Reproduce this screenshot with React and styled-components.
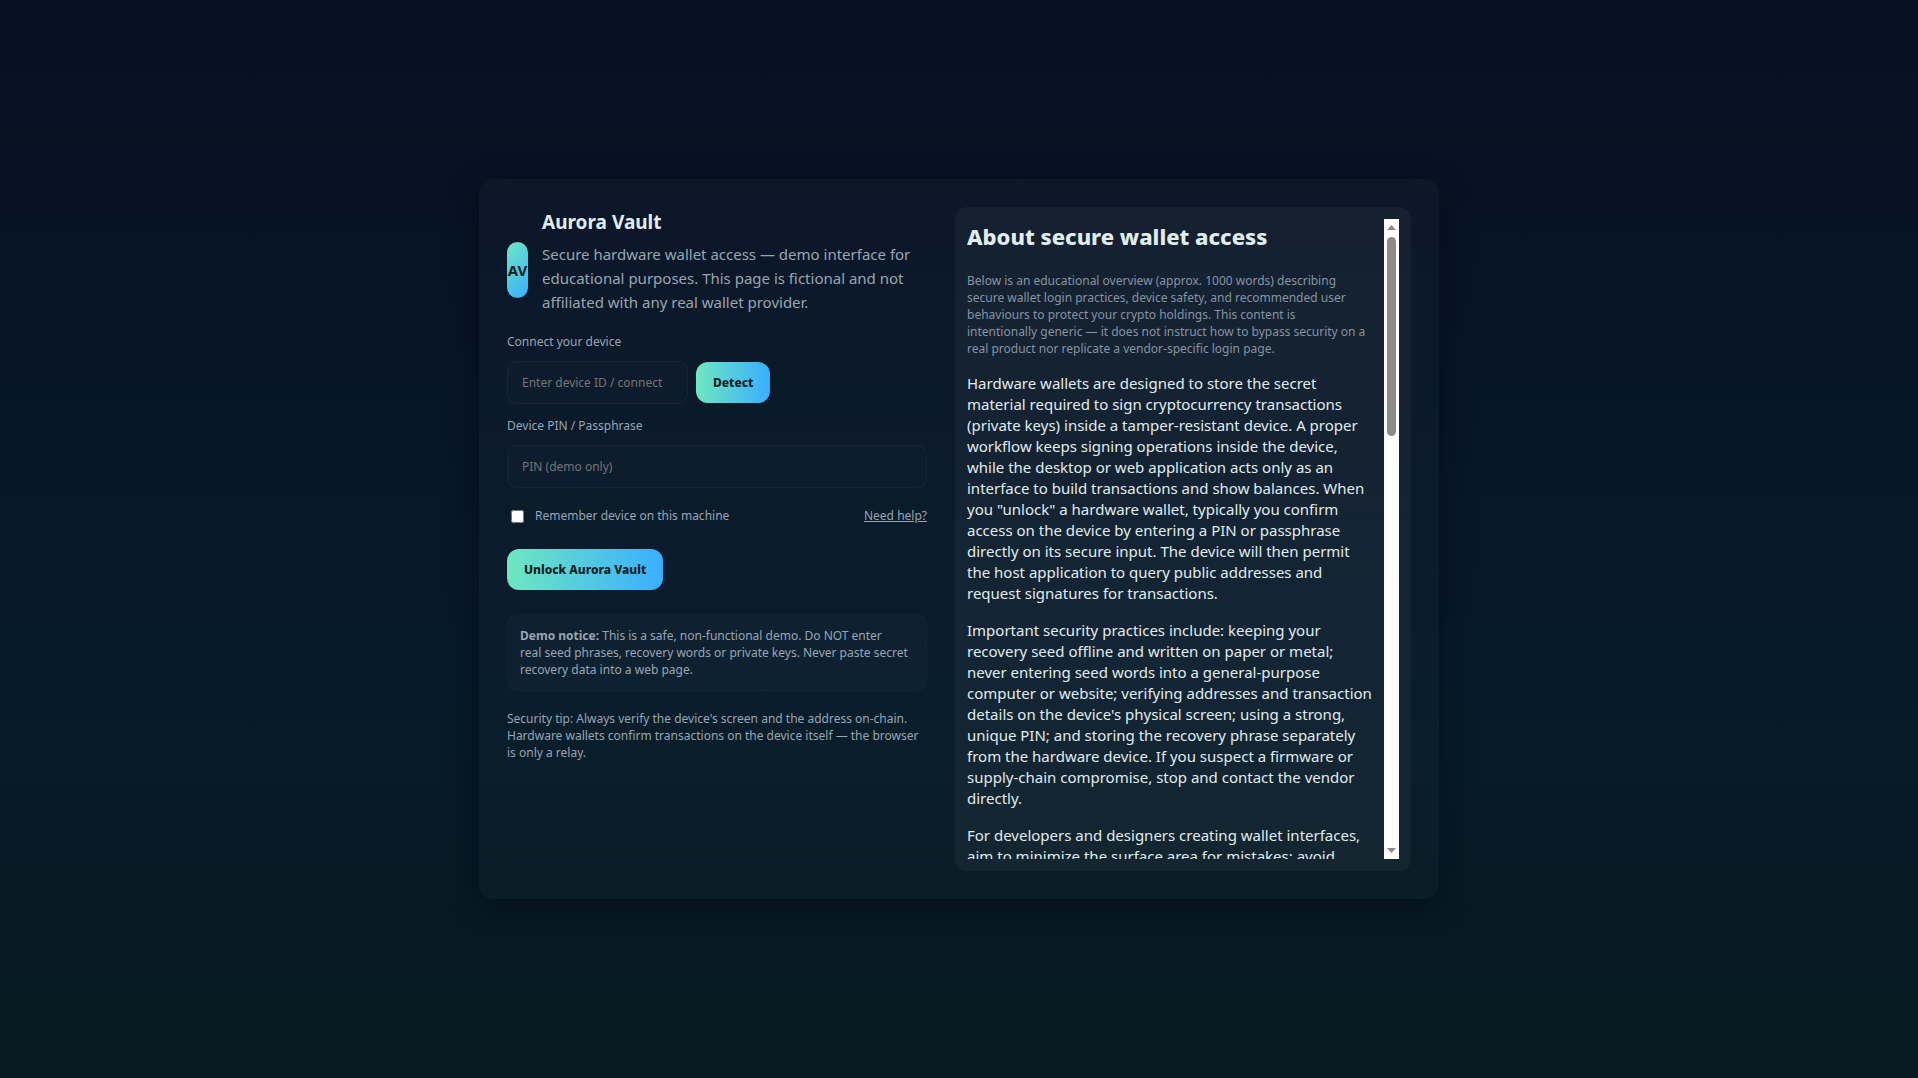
import React, { useState } from 'react';
import styled, { createGlobalStyle } from 'styled-components';

const GlobalStyle = createGlobalStyle`
    * {
        box-sizing: border-box;
    }
    body {
        margin: 0;
        color: #e0ecee;
        font-family: 'Noto Sans', 'Open Sans', sans-serif;
        font-size: 15px;
        line-height: 21px;
    }
`;

const Page = styled.div`
    min-height: 100vh;
    display: flex;
    align-items: center;
    justify-content: center;
    background: linear-gradient(180deg, #071022 0%, #071a2a 60%, #071b21 100%);
`;

const Card = styled.main`
    width: 100%;
    max-width: 960px;
    display: grid;
    grid-template-columns: 420px 1fr;
    gap: 28px;
    padding: 28px;
    border-radius: 14px;
    background: linear-gradient(180deg, rgba(255, 255, 255, 0.02), rgba(255, 255, 255, 0.01));
    box-shadow: 0 8px 30px rgba(2, 6, 23, 0.6);
`;

const Brand = styled.header`
    display: flex;
    align-items: flex-start;
    gap: 14px;
    padding-bottom: 19px;
`;

const Logo = styled.div`
    width: 21px;
    height: 56px;
    margin-top: 35px;
    flex-shrink: 0;
    display: flex;
    align-items: center;
    justify-content: center;
    border-radius: 12px;
    background: linear-gradient(135deg, #6ee7c1, #3aaeff);
    color: #04201f;
    font-weight: 700;
`;

const Title = styled.h1`
    margin: 0 0 5px;
    font-size: 19px;
    line-height: 30px;
`;

const Lead = styled.p`
    margin: 0;
    color: #98a6b3;
    line-height: 24px;
`;

const Form = styled.form`
    display: flex;
    flex-direction: column;
    align-items: flex-start;
`;

const Label = styled.label`
    color: #98a6b3;
    font-size: 12px;
    line-height: 18px;
    margin-bottom: 10px;
`;

const Field = styled.div`
    display: flex;
    align-items: center;
    gap: 8px;
    margin-bottom: 13px;
`;

const Input = styled.input`
    width: ${props => props.$wide ? '100%' : '181px'};
    height: 43px;
    padding: 0 14px;
    border: 1px solid rgba(255, 255, 255, 0.04);
    border-radius: 10px;
    background: rgba(255, 255, 255, 0.01);
    color: inherit;
    font-family: inherit;
    font-size: 12px;
    &::placeholder {
        color: #757575;
    }
`;

const Button = styled.button`
    height: 41px;
    padding: 0 17px;
    border: none;
    border-radius: 12px;
    background: linear-gradient(90deg, #6ee7c1, #3aaeff);
    color: #04201f;
    font-family: inherit;
    font-size: 12px;
    font-weight: 800;
    white-space: nowrap;
    cursor: pointer;
`;

const Row = styled.div`
    align-self: stretch;
    display: flex;
    align-items: center;
    justify-content: space-between;
    margin: 18px 0 23px;
    color: #98a6b3;
    font-size: 12px;
    line-height: 20px;
`;

const Remember = styled.label`
    display: flex;
    align-items: center;
    gap: 11px;
    input {
        width: 13px;
        height: 13px;
        margin: 0 0 0 4px;
    }
`;

const HelpLink = styled.a`
    color: inherit;
`;

const Notice = styled.div`
    margin-top: 24px;
    padding: 12px;
    border: 1px solid rgba(255, 255, 255, 0.02);
    border-radius: 10px;
    background: rgba(255, 255, 255, 0.02);
    color: #98a6b3;
    font-size: 12px;
    line-height: 17px;
`;

const Small = styled.p`
    margin: ${props => props.$margin || '0'};
    color: ${props => props.$dim ? '#8794a1' : '#98a6b3'};
    font-size: 12px;
    line-height: 17px;
`;

const About = styled.aside`
    display: flex;
    padding: 12px;
    border-radius: 12px;
    background: rgba(255, 255, 255, 0.04);
`;

const Scroller = styled.div`
    flex: 1;
    height: 640px;
    padding-right: 9px;
    overflow-y: auto;
    scrollbar-width: none;
`;

const Scrollbar = styled.div`
    width: 15px;
    flex-shrink: 0;
    display: flex;
    flex-direction: column;
    align-items: center;
    justify-content: space-between;
    padding: 6px 0;
    background: #fcfcfc;
`;

const Track = styled.div`
    flex: 1;
    width: 9px;
    margin: 7px 0;
`;

const Thumb = styled.div`
    height: 33%;
    border-radius: 5px;
    background: #8b8b8b;
`;

const Arrow = ({ down }) => (
    <svg width="9" height="5" viewBox="0 0 9 5" aria-hidden="true">
        <polygon points={down ? '0,0 9,0 4.5,5' : '0,5 9,5 4.5,0'} fill="#8b8b8b" />
    </svg>
);

const Heading = styled.h2`
    margin: 0 0 19px;
    font-size: 22px;
    font-weight: 800;
    line-height: 34px;
`;

const Text = styled.p`
    margin: 16px 0;
`;

const paragraphs = [
    'Hardware wallets are designed to store the secret material required to sign cryptocurrency transactions (private keys) inside a tamper-resistant device. A proper workflow keeps signing operations inside the device, while the desktop or web application acts only as an interface to build transactions and show balances. When you "unlock" a hardware wallet, typically you confirm access on the device by entering a PIN or passphrase directly on its secure input. The device will then permit the host application to query public addresses and request signatures for transactions.',
    'Important security practices include: keeping your recovery seed offline and written on paper or metal; never entering seed words into a general-purpose computer or website; verifying addresses and transaction details on the device\'s physical screen; using a strong, unique PIN; and storing the recovery phrase separately from the hardware device. If you suspect a firmware or supply-chain compromise, stop and contact the vendor directly.',
    'For developers and designers creating wallet interfaces, aim to minimize the surface area for mistakes: avoid',
];

const App = () => {
    const [remember, setRemember] = useState(false);

    return (
        <>
            <GlobalStyle />
            <Page>
                <Card>
                    <section>
                        <Brand>
                            <Logo>AV</Logo>
                            <div>
                                <Title>Aurora Vault</Title>
                                <Lead>Secure hardware wallet access — demo interface for educational purposes. This page is fictional and not affiliated with any real wallet provider.</Lead>
                            </div>
                        </Brand>
                        <Form onSubmit={e => e.preventDefault()}>
                            <Label htmlFor="device">Connect your device</Label>
                            <Field>
                                <Input id="device" type="text" placeholder="Enter device ID / connect" />
                                <Button type="button">Detect</Button>
                            </Field>
                            <Label htmlFor="pin">Device PIN / Passphrase</Label>
                            <Input id="pin" type="password" placeholder="PIN (demo only)" $wide />
                            <Row>
                                <Remember>
                                    <input type="checkbox" checked={remember} onChange={e => setRemember(e.target.checked)} />
                                    Remember device on this machine
                                </Remember>
                                <HelpLink href="#help">Need help?</HelpLink>
                            </Row>
                            <Button type="submit">Unlock Aurora Vault</Button>
                        </Form>
                        <Notice>
                            <strong>Demo notice:</strong> This is a safe, non-functional demo. Do NOT enter<br />
                            real seed phrases, recovery words or private keys. Never paste secret recovery data into a web page.
                        </Notice>
                        <Small $margin="19px 0 0">Security tip: Always verify the device's screen and the address on-chain. Hardware wallets confirm transactions on the device itself — the browser is only a relay.</Small>
                    </section>
                    <About>
                        <Scroller>
                            <Heading>About secure wallet access</Heading>
                            <Small $dim>
                                Below is an educational overview (approx. 1000 words) describing secure wallet login practices, device safety, and recommended user behaviours to protect your crypto holdings. This content is<br />
                                intentionally generic — it does not instruct how to bypass security on a real product nor replicate a vendor-specific login page.
                            </Small>
                            {paragraphs.map(text => <Text key={text}>{text}</Text>)}
                        </Scroller>
                        <Scrollbar>
                            <Arrow />
                            <Track>
                                <Thumb />
                            </Track>
                            <Arrow down />
                        </Scrollbar>
                    </About>
                </Card>
            </Page>
        </>
    );
};

export default App;
